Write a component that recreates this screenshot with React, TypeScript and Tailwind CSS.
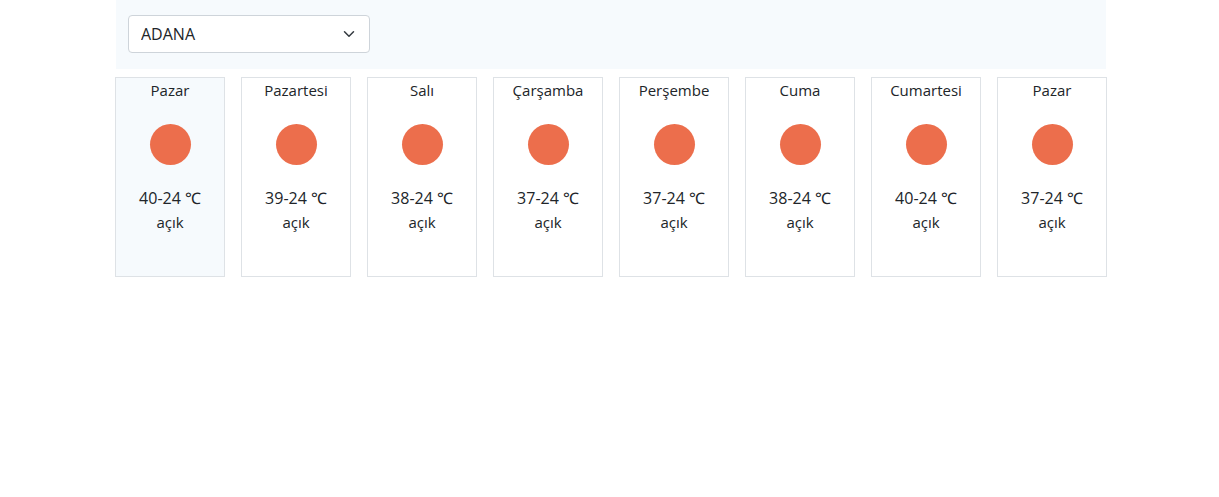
import { useState } from "react";

type Forecast = { day: string; high: number; low: number; sky: string };

const forecasts: Forecast[] = [
  { day: "Pazar", high: 40, low: 24, sky: "açık" },
  { day: "Pazartesi", high: 39, low: 24, sky: "açık" },
  { day: "Salı", high: 38, low: 24, sky: "açık" },
  { day: "Çarşamba", high: 37, low: 24, sky: "açık" },
  { day: "Perşembe", high: 37, low: 24, sky: "açık" },
  { day: "Cuma", high: 38, low: 24, sky: "açık" },
  { day: "Cumartesi", high: 40, low: 24, sky: "açık" },
  { day: "Pazar", high: 37, low: 24, sky: "açık" },
];

function CitySelect() {
  const [city, setCity] = useState("ADANA");
  return (
    <div className="grid w-full max-w-[242px] items-center">
      <select
        aria-label="Şehir"
        value={city}
        onChange={(e) => setCity(e.target.value)}
        className="col-start-1 row-start-1 h-[38px] w-full appearance-none rounded border border-[#ced4da] bg-white pr-9 pl-3 text-base text-[#212529]"
      >
        <option value="ADANA">ADANA</option>
      </select>
      <svg
        viewBox="0 0 16 16"
        className="pointer-events-none col-start-1 row-start-1 mr-[15px] h-3 w-3 justify-self-end"
        fill="none"
        stroke="#343a40"
        strokeWidth="2"
        strokeLinecap="round"
        strokeLinejoin="round"
        aria-hidden="true"
      >
        <path d="m2 5 6 6 6-6" />
      </svg>
    </div>
  );
}

function DayCard({ forecast, today }: { forecast: Forecast; today: boolean }) {
  return (
    <li
      className={`flex h-[200px] flex-col items-center border border-[#dee2e6] text-center ${
        today ? "bg-[#f6fafd]" : "bg-white"
      }`}
    >
      <p>{forecast.day}</p>
      <svg viewBox="0 0 84 84" className="h-[84px] w-[84px]" aria-hidden="true">
        <circle cx="42.5" cy="42.5" r="20.5" fill="#ec6e4c" />
      </svg>
      <p className="text-base">
        {forecast.high}-{forecast.low} ℃
      </p>
      <p>{forecast.sky}</p>
    </li>
  );
}

export default function App() {
  return (
    <main className="pl-[3px] font-['Open_Sans','Noto_Sans',sans-serif] text-[15px] leading-6 text-[#212529]">
      <div className="mx-auto max-w-[992px]">
        <header className="mx-px bg-[#f6fafd] px-3 pt-[15px] pb-4">
          <CitySelect />
        </header>
        <ul className="mt-2 grid grid-cols-4 gap-4 md:grid-cols-8">
          {forecasts.map((forecast, index) => (
            <DayCard key={index} forecast={forecast} today={index === 0} />
          ))}
        </ul>
      </div>
    </main>
  );
}
